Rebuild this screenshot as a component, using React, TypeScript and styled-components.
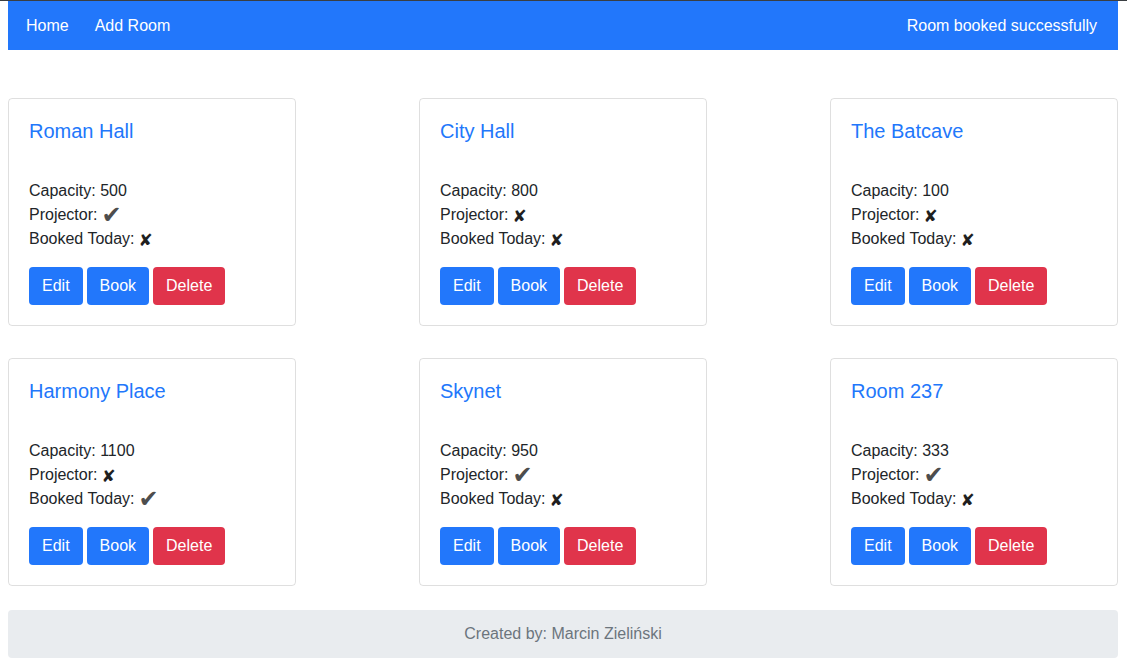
import React from "react";
import styled, { createGlobalStyle } from "styled-components";

const Global = createGlobalStyle`
  html { border-top: 1px solid #3a3e42; }
  body {
    margin: 0 9px 8px 8px;
    font-family: "Liberation Sans", Arial, sans-serif;
    font-size: 16px;
    line-height: 1.5;
    color: #212529;
    background: #fff;
  }
  * { box-sizing: border-box; }
`;

const Page = styled.div`
  display: flex;
  flex-direction: column;
`;

const Navbar = styled.nav`
  height: 49px;
  background: #2277fb;
  display: flex;
  align-items: center;
  justify-content: space-between;
  padding: 0 21px 0 18px;
  margin-bottom: 48px;
`;

const NavLinks = styled.div`
  display: flex;
  gap: 26px;
`;

const NavText = styled.span`
  color: #fff;
  font-size: 16px;
`;

const Grid = styled.div`
  display: flex;
  flex-wrap: wrap;
  justify-content: space-between;
  row-gap: 32px;
  margin-bottom: 24px;
`;

const Card = styled.div`
  width: 288px;
  border: 1px solid rgba(0, 0, 0, 0.125);
  border-radius: 4px;
  padding: 20px;
`;

const Title = styled.h5`
  margin: 0 0 36px;
  font-size: 20px;
  font-weight: 400;
  line-height: 24px;
  color: #2277fb;
`;

const Info = styled.p`
  margin: 0;
  height: 24px;
  line-height: 24px;
  display: flex;
  align-items: center;
  gap: 4px;
`;

const Check = styled.span`
  font-family: "DejaVu Sans", sans-serif;
  font-size: 24px;
  line-height: 24px;
  color: #4d4d4d;
`;

const Cross = styled.span`
  font-family: "DejaVu Sans", sans-serif;
  font-size: 17px;
  line-height: 24px;
  color: #1f1f1f;
  padding-top: 2px;
`;

const Actions = styled.div`
  display: flex;
  gap: 4px;
  margin-top: 16px;
`;

const Button = styled.button<{ $danger?: boolean }>`
  font-family: inherit;
  font-size: 16px;
  line-height: 24px;
  padding: 6px 12px;
  border: 1px solid transparent;
  border-radius: 4px;
  color: #fff;
  background: ${(p) => (p.$danger ? "#e0344b" : "#2277fb")};
  cursor: pointer;
`;

const Footer = styled.footer`
  height: 48px;
  background: #e9ecef;
  border-radius: 4px;
  display: flex;
  align-items: center;
  justify-content: center;
  color: #6c757d;
`;

type Room = { name: string; capacity: number; projector: boolean; booked: boolean };

const rooms: Room[] = [
  { name: "Roman Hall", capacity: 500, projector: true, booked: false },
  { name: "City Hall", capacity: 800, projector: false, booked: false },
  { name: "The Batcave", capacity: 100, projector: false, booked: false },
  { name: "Harmony Place", capacity: 1100, projector: false, booked: true },
  { name: "Skynet", capacity: 950, projector: true, booked: false },
  { name: "Room 237", capacity: 333, projector: true, booked: false },
];

const Mark = ({ v }: { v: boolean }) => (v ? <Check>✔</Check> : <Cross>✘</Cross>);

export default function App() {
  return (
    <Page>
      <Global />
      <Navbar>
        <NavLinks>
          <NavText>Home</NavText>
          <NavText>Add Room</NavText>
        </NavLinks>
        <NavText>Room booked successfully</NavText>
      </Navbar>
      <Grid>
        {rooms.map((r) => (
          <Card key={r.name}>
            <Title>{r.name}</Title>
            <Info>Capacity: {r.capacity}</Info>
            <Info>
              <span>Projector:</span>
              <Mark v={r.projector} />
            </Info>
            <Info>
              <span>Booked Today:</span>
              <Mark v={r.booked} />
            </Info>
            <Actions>
              <Button>Edit</Button>
              <Button>Book</Button>
              <Button $danger>Delete</Button>
            </Actions>
          </Card>
        ))}
      </Grid>
      <Footer>Created by: Marcin Zieliński</Footer>
    </Page>
  );
}
